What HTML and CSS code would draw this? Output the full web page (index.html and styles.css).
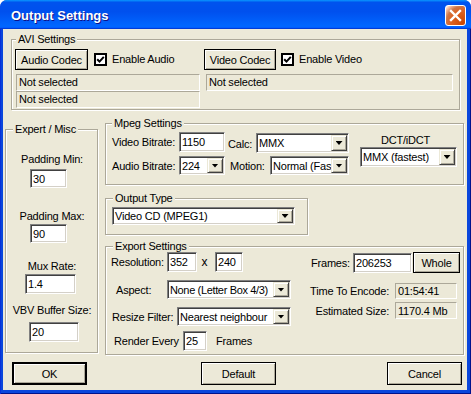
FILE: index.html
```html
<!DOCTYPE html>
<html lang="en">
<head>
    <meta charset="UTF-8">
    <title>Output Settings</title>
    <link rel="stylesheet" href="styles.css">
</head>
<body>
<div class="window">
    <div class="titlebar">
        <span class="title">Output Settings</span>
        <span class="close">
            <svg width="19" height="19" viewBox="0 0 19 19"><path d="M5 5L14 14M14 5L5 14" stroke="#fff" stroke-width="2.4" stroke-linecap="square"/></svg>
        </span>
    </div>
    <div class="frame">
        <div class="client">

            <div class="group avi">
                <div class="group-title">AVI Settings</div>
                <div class="avi-body">
                    <div class="codec-row">
                        <button class="btn btn-audio">Audio Codec</button>
                        <span class="check"><svg width="9" height="9" viewBox="0 0 9 9"><path d="M1.2 4.2L3.5 6.6L7.8 1.8" fill="none" stroke="#000" stroke-width="2"/></svg></span>
                        <span class="check-label">Enable Audio</span>
                    </div>
                    <div class="codec-row codec-video">
                        <button class="btn btn-video">Video Codec</button>
                        <span class="check"><svg width="9" height="9" viewBox="0 0 9 9"><path d="M1.2 4.2L3.5 6.6L7.8 1.8" fill="none" stroke="#000" stroke-width="2"/></svg></span>
                        <span class="check-label">Enable Video</span>
                    </div>
                    <div class="static static-audio">Not selected</div>
                    <div class="static static-video">Not selected</div>
                    <div class="static static-audio">Not selected</div>
                </div>
            </div>

            <div class="middle">
                <div class="group expert">
                    <div class="group-title">Expert / Misc</div>
                    <div class="exp-label pad-min">Padding Min:</div>
                    <input class="field f-pad-min" value="30">
                    <div class="exp-label pad-max">Padding Max:</div>
                    <input class="field f-pad-max" value="90">
                    <div class="exp-label mux">Mux Rate:</div>
                    <input class="field f-mux" value="1.4">
                    <div class="exp-label vbv">VBV Buffer Size:</div>
                    <input class="field f-vbv" value="20">
                </div>

                <div class="right">
                    <div class="group mpeg">
                        <div class="group-title">Mpeg Settings</div>
                        <div class="mpeg-body">
                            <div class="mpeg-left">
                                <div class="row row-video">
                                    <span class="lbl lbl-bitrate">Video Bitrate:</span>
                                    <input class="field f-bitrate" value="1150">
                                    <span class="lbl lbl-calc">Calc:</span>
                                    <div class="combo cb-calc"><span class="val">MMX</span><span class="arrow"></span></div>
                                </div>
                                <div class="row row-audio">
                                    <span class="lbl lbl-bitrate">Audio Bitrate:</span>
                                    <div class="combo cb-audio"><span class="val">224</span><span class="arrow"></span></div>
                                    <span class="lbl lbl-motion">Motion:</span>
                                    <div class="combo cb-motion"><span class="val">Normal (Fast)</span><span class="arrow"></span></div>
                                </div>
                            </div>
                            <div class="dct">
                                <div class="dct-label">DCT/iDCT</div>
                                <div class="combo cb-dct"><span class="val">MMX (fastest)</span><span class="arrow"></span></div>
                            </div>
                        </div>
                    </div>

                    <div class="group output">
                        <div class="group-title">Output Type</div>
                        <div class="output-body">
                            <div class="combo cb-output"><span class="val">Video CD (MPEG1)</span><span class="arrow"></span></div>
                        </div>
                    </div>

                    <div class="group export">
                        <div class="group-title">Export Settings</div>
                        <div class="export-body">
                            <div class="exp-left">
                                <div class="row row-res">
                                    <span class="lbl lbl-res">Resolution:</span>
                                    <input class="field f-width" value="352">
                                    <span class="lbl times">x</span>
                                    <input class="field f-height" value="240">
                                </div>
                                <div class="row row-aspect">
                                    <span class="lbl lbl-aspect">Aspect:</span>
                                    <div class="combo cb-aspect"><span class="val">None (Letter Box 4/3)</span><span class="arrow"></span></div>
                                </div>
                                <div class="row row-resize">
                                    <span class="lbl lbl-resize">Resize Filter:</span>
                                    <div class="combo cb-resize"><span class="val">Nearest neighbour</span><span class="arrow"></span></div>
                                </div>
                                <div class="row row-render">
                                    <span class="lbl lbl-render">Render Every</span>
                                    <input class="field f-render" value="25">
                                    <span class="lbl lbl-frames">Frames</span>
                                </div>
                            </div>
                            <div class="exp-right">
                                <div class="row row-frames">
                                    <span class="lbl lbl-total">Frames:</span>
                                    <input class="field f-frames" value="206253">
                                    <button class="btn btn-whole">Whole</button>
                                </div>
                                <div class="row row-time">
                                    <span class="lbl lbl-info">Time To Encode:</span>
                                    <div class="static static-info">01:54:41</div>
                                </div>
                                <div class="row row-size">
                                    <span class="lbl lbl-info">Estimated Size:</span>
                                    <div class="static static-info">1170.4 Mb</div>
                                </div>
                            </div>
                        </div>
                    </div>
                </div>
            </div>

            <div class="buttons">
                <button class="btn btn-main btn-ok">OK</button>
                <button class="btn btn-main btn-reset">Default</button>
                <button class="btn btn-main btn-cancel">Cancel</button>
            </div>

        </div>
    </div>
</div>
</body>
</html>
```

FILE: styles.css
```css
* {
    box-sizing: border-box;
}
body {
    margin: 0;
    font-family: "Liberation Sans", Arial, sans-serif;
    font-size: 11px;
    letter-spacing: -0.2px;
    color: #000;
}
.window {
    width: 471px;
    height: 394px;
    border-radius: 7px 7px 0 0;
    overflow: hidden;
    background: #0a46dc;
}

/* title bar */
.titlebar {
    height: 29px;
    display: flex;
    justify-content: space-between;
    align-items: flex-start;
    padding: 0 5px 0 11px;
    background: linear-gradient(180deg, #0997ff, #0053ee 8%, #0050ee 40%, #06f 88%, #06f 93%, #005bff 95%, #003dd7 96%, #003dd7);
}
.title {
    margin-top: 8px;
    color: #fff;
    font: bold 13px/16px "Liberation Sans", Arial, sans-serif;
    letter-spacing: 0;
    text-shadow: 1px 1px #0f1089;
}
.close {
    margin-top: 5px;
    width: 21px;
    height: 21px;
    border: 1px solid #fff;
    border-radius: 3px;
    display: flex;
    align-items: center;
    justify-content: center;
    background: radial-gradient(circle at 90% 90%, #cc4600 0%, #dc6527 55%, #cd7546 70%, #ffccb2 90%, #fff 100%);
}

.frame {
    height: 365px;
    padding: 0 4px 4px 3px;
    box-shadow: inset 1px 0 #0831d9, inset -1px -1px #00138c;
}
.client {
    display: flow-root;
    height: 361px;
    background: #ece9d8;
}

/* group boxes */
.group {
    border: 1px solid #aca899;
    box-shadow: inset 1px 1px #fff, 1px 1px #fff;
}
.group-title {
    display: table;
    margin: -7px 0 0 7px;
    padding: 0 2px;
    line-height: 13px;
    background: #ece9d8;
    white-space: nowrap;
}

/* controls */
.btn {
    display: block;
    padding: 0;
    font: inherit;
    letter-spacing: inherit;
    color: #000;
    background: #ece9d8;
    border: 1px solid #000;
    box-shadow: inset 1px 1px #fff, inset -1px -1px #aca899;
    text-align: center;
    flex-shrink: 0;
}
.field {
    display: block;
    font: inherit;
    letter-spacing: inherit;
    color: #000;
    background: #fff;
    border: 1px solid;
    border-color: #808080 #fff #fff #808080;
    box-shadow: inset 1px 1px #404040, inset -1px -1px #d4d0c8;
    padding: 0 0 0 2px;
    margin: 0;
    outline: none;
    flex-shrink: 0;
}
.static {
    height: 17px;
    border: 1px solid;
    border-color: #aca899 #fff #fff #aca899;
    padding-left: 2px;
    line-height: 15px;
    white-space: nowrap;
}
.combo {
    display: flex;
    background: #fff;
    border: 1px solid;
    border-color: #808080 #fff #fff #808080;
    box-shadow: inset 1px 1px #404040, inset -1px -1px #d4d0c8;
    padding: 1px;
    flex-shrink: 0;
}
.combo .val {
    flex: 1;
    min-width: 0;
    padding-left: 1px;
    overflow: hidden;
    white-space: nowrap;
    display: flex;
    align-items: center;
}
.combo .arrow {
    width: 16px;
    flex-shrink: 0;
    display: flex;
    align-items: center;
    justify-content: center;
    background: #ece9d8;
    border: 1px solid;
    border-color: #ece9d8 #404040 #404040 #ece9d8;
    box-shadow: inset 1px 1px #fff, inset -1px -1px #aca899;
}
.combo .arrow::after {
    content: "";
    width: 7px;
    height: 4px;
    background: #000;
    clip-path: polygon(0 0, 100% 0, 50% 100%);
}
.check {
    width: 13px;
    height: 13px;
    border: 2px solid #000;
    background: #fff;
    display: flex;
    align-items: center;
    justify-content: center;
    flex-shrink: 0;
}
.row {
    display: flex;
}
.lbl {
    white-space: nowrap;
    flex-shrink: 0;
}

/* AVI settings */
.avi {
    margin: 10px 0 0 8px;
    width: 449px;
}
.avi .group-title {
    margin-left: 4px;
}
.avi-body {
    display: grid;
    grid-template-columns: 185px 249px;
    grid-template-rows: 21px 21px 17px;
    column-gap: 4px;
    padding: 3px 0 1px 3px;
}
.codec-row {
    display: flex;
    align-items: center;
}
.btn-audio {
    width: 73px;
    height: 21px;
}
.btn-video {
    width: 72px;
    height: 21px;
}
.codec-row .check {
    margin-left: 6px;
}
.codec-video .check {
    margin-left: 5px;
}
.check-label {
    margin-left: 5px;
    line-height: 13px;
}
.static-audio {
    align-self: end;
    margin-left: 1px;
    width: 184px;
}
.static-video {
    align-self: end;
    margin-left: 2px;
    width: 247px;
}

/* middle area */
.middle {
    display: flex;
    align-items: flex-start;
}
.expert {
    margin: 19px 0 0 2px;
    width: 93px;
    height: 224px;
}
.exp-label {
    text-align: center;
    line-height: 13px;
    padding-left: 1px;
}
.pad-min { margin-top: 17px; }
.pad-max { margin-top: 22px; }
.mux { margin-top: 17px; }
.vbv { margin-top: 10px; }
.f-pad-min { margin: 3px 0 0 24px; width: 37px; height: 19px; }
.f-pad-max { margin: 1px 0 0 24px; width: 37px; height: 19px; }
.f-mux { margin: 1px 0 0 19px; width: 51px; height: 20px; }
.f-vbv { margin: 5px 0 0 23px; width: 50px; height: 20px; }

.right {
    margin-left: 7px;
    width: 359px;
}

/* mpeg settings */
.mpeg {
    margin-top: 13px;
    height: 62px;
}
.mpeg .group-title {
    margin-left: 6px;
}
.mpeg-body {
    display: flex;
    padding-top: 2px;
}
.mpeg-left {
    padding-left: 6px;
}
.row-video {
    height: 21px;
    align-items: flex-start;
}
.row-video .lbl {
    line-height: 20px;
}
.lbl-bitrate {
    width: 67px;
}
.f-bitrate {
    width: 46px;
    height: 20px;
}
.lbl-calc {
    margin-left: 3px;
    width: 28px;
    padding-top: 2px;
}
.cb-calc {
    margin-top: 1px;
    width: 93px;
    height: 20px;
}
.row-audio {
    margin-top: 3px;
    height: 19px;
    align-items: center;
}
.cb-audio {
    width: 46px;
    height: 19px;
}
.lbl-motion {
    margin-left: 5px;
    width: 40px;
}
.cb-motion {
    width: 79px;
    height: 19px;
}
.dct {
    margin: 2px 0 0 11px;
}
.dct-label {
    margin-left: 21px;
    line-height: 13px;
}
.cb-dct {
    width: 97px;
    height: 20px;
}

/* output type */
.output {
    margin-top: 13px;
    width: 203px;
    height: 37px;
}
.output-body {
    padding: 2px 0 0 6px;
}
.cb-output {
    width: 183px;
    height: 18px;
}

/* export settings */
.export {
    margin-top: 11px;
    height: 109px;
}
.export-body {
    display: flex;
    margin-top: -1px;
}
.exp-left {
    width: 194px;
}
.row-res {
    height: 20px;
    padding-left: 5px;
    align-items: center;
}
.lbl-res {
    width: 56px;
}
.f-width {
    width: 30px;
    height: 20px;
}
.times {
    width: 18px;
    padding-right: 3px;
    text-align: center;
    font-size: 12px;
}
.f-height {
    width: 28px;
    height: 20px;
}
.row-aspect {
    margin-top: 8px;
    height: 19px;
    padding-left: 10px;
    align-items: center;
}
.lbl-aspect {
    width: 51px;
}
.cb-aspect {
    width: 124px;
    height: 19px;
    letter-spacing: -0.35px;
}
.row-resize {
    margin-top: 8px;
    height: 19px;
    padding-left: 6px;
    align-items: center;
}
.lbl-resize {
    width: 65px;
}
.cb-resize {
    width: 114px;
    height: 19px;
}
.row-render {
    margin-top: 5px;
    height: 20px;
    padding-left: 8px;
    align-items: center;
}
.lbl-render {
    width: 69px;
}
.f-render {
    width: 24px;
    height: 20px;
}
.lbl-frames {
    margin-left: 9px;
}
.exp-right {
    flex: 1;
}
.row-frames {
    height: 21px;
    align-items: flex-start;
}
.lbl-total {
    margin: 1px 0 0 11px;
    width: 42px;
    line-height: 20px;
}
.f-frames {
    margin-top: 1px;
    width: 59px;
    height: 20px;
}
.btn-whole {
    margin-left: 1px;
    width: 47px;
    height: 21px;
}
.row-time {
    margin-top: 10px;
    height: 16px;
    align-items: center;
}
.row-size {
    margin-top: 3px;
    height: 17px;
    align-items: center;
}
.lbl-info {
    width: 95px;
    padding-right: 6px;
    text-align: right;
}
.static-info {
    width: 62px;
    height: 100%;
    line-height: normal;
    display: flex;
    align-items: center;
}

/* dialog buttons */
.buttons {
    display: flex;
    margin: 7px 0 0 9px;
}
.btn-main {
    width: 75px;
    height: 23px;
}
.btn-ok {
    border-width: 2px;
}
.btn-reset {
    margin-left: 114px;
}
.btn-cancel {
    margin-left: 111px;
}
```
